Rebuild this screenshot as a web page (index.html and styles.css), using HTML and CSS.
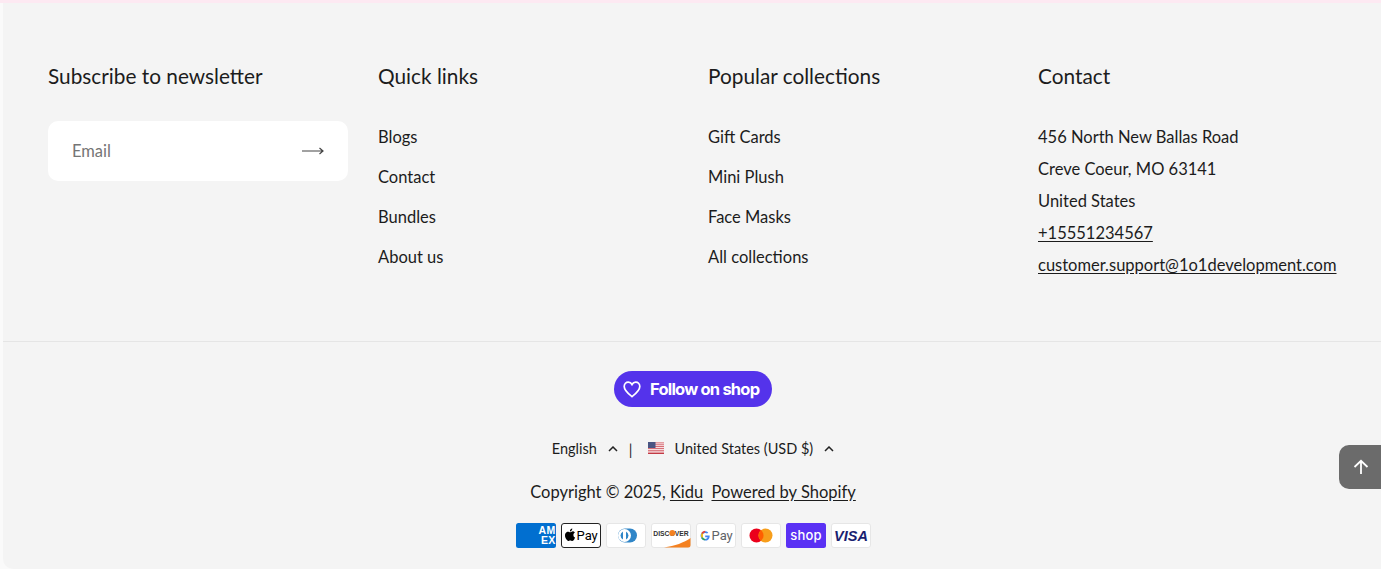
FILE: index.html
```html
<!DOCTYPE html>
<html lang="en">
    <head>
        <meta charset="UTF-8">
        <meta name="viewport" content="width=device-width, initial-scale=1.0">
        <title>Footer - Kidu</title>
        <link rel="stylesheet" href="styles.css">
    </head>
    <body>
        <div class="top-strip"></div>

        <footer class="footer">
            <div class="footer-columns">
                <div class="footer-col">
                    <h2>Subscribe to newsletter</h2>
                    <form class="newsletter">
                        <input type="email" placeholder="Email" aria-label="Email">
                        <button type="button" class="newsletter-btn" aria-label="Subscribe">
                            <svg width="22" height="10" viewBox="0 0 22 10" fill="none" stroke="#444" stroke-width="1.2"><path d="M0 5h21M17.500 2l3.500 3-3.500 3"/></svg>
                        </button>
                    </form>
                </div>
                <div class="footer-col">
                    <h2>Quick links</h2>
                    <ul class="link-list">
                        <li><a href="#">Blogs</a></li>
                        <li><a href="#">Contact</a></li>
                        <li><a href="#">Bundles</a></li>
                        <li><a href="#">About us</a></li>
                    </ul>
                </div>
                <div class="footer-col">
                    <h2>Popular collections</h2>
                    <ul class="link-list">
                        <li><a href="#">Gift Cards</a></li>
                        <li><a href="#">Mini Plush</a></li>
                        <li><a href="#">Face Masks</a></li>
                        <li><a href="#">All collections</a></li>
                    </ul>
                </div>
                <div class="footer-col">
                    <h2>Contact</h2>
                    <address class="contact">
                        <p>456 North New Ballas Road</p>
                        <p>Creve Coeur, MO 63141</p>
                        <p>United States</p>
                        <p><a href="#">+15551234567</a></p>
                        <p><a href="#">customer.support@1o1development.com</a></p>
                    </address>
                </div>
            </div>

            <div class="footer-bottom">
                <a href="#" class="follow-btn">
                    <svg width="18" height="17" viewBox="0 0 18 17" fill="none" stroke="#fff" stroke-width="1.7"><path d="M9 15.600C6.500 13.600 1.200 10 1.200 5.600 1.200 3 3.100 1.200 5.300 1.200c1.600 0 2.900.8 3.700 2.300.8-1.500 2.100-2.300 3.700-2.300 2.200 0 4.100 1.800 4.100 4.400 0 4.400-5.300 8-7.800 10z"/></svg>
                    <span>Follow on shop</span>
                </a>

                <div class="locale-row">
                    <span class="locale">English
                        <svg class="chevron" width="10" height="6" viewBox="0 0 10 6" fill="none" stroke="#222" stroke-width="1.5"><path d="M1 5l4-4 4 4"/></svg>
                    </span>
                    <span class="locale-sep">|</span>
                    <span class="locale">
                        <svg class="flag" width="16" height="12" viewBox="0 0 16 12">
                            <rect width="16" height="12" fill="#fff"/>
                            <path d="M0 .9h16M0 2.800h16M0 4.600h16M0 6.400h16M0 8.300h16M0 10.100h16" stroke="#d0555f" stroke-width=".95"/>
                            <path d="M0 11.500h16" stroke="#c23a45" stroke-width="1"/>
                            <rect width="7.500" height="6" fill="#4a5583"/>
                        </svg>
                        <span class="locale-name">United States (USD $)</span>
                        <svg class="chevron" width="10" height="6" viewBox="0 0 10 6" fill="none" stroke="#222" stroke-width="1.5"><path d="M1 5l4-4 4 4"/></svg>
                    </span>
                </div>

                <p class="copyright">Copyright © 2025, <a href="#">Kidu</a> <a href="#" class="powered">Powered by Shopify</a></p>

                <div class="payments">
                    <svg class="pay" viewBox="0 0 40 25">
                        <rect width="40" height="25" rx="2.500" fill="#016fd0"/>
                        <text x="39.500" y="10.500" text-anchor="end" class="amex-text">AM</text>
                        <text x="39.500" y="21" text-anchor="end" class="amex-text">EX</text>
                    </svg>
                    <svg class="pay" viewBox="0 0 40 25">
                        <rect x=".5" y=".5" width="39" height="24" rx="2.500" fill="#fff" stroke="#222"/>
                        <path d="M10.600 7.600c.5-.6.8-1.300.7-2-.7 0-1.400.4-1.800 1-.4.4-.7 1.200-.6 1.900.7 0 1.300-.4 1.700-.9zM11.300 8.700c-1 0-1.800.6-2.300.6s-1.200-.6-2-.6c-1 0-2 .6-2.500 1.500-1.100 1.900-.3 4.600.8 6.100.5.800 1.200 1.600 2 1.600s1.100-.5 2-.5 1.200.5 2 .5 1.400-.8 1.900-1.500c.6-.9.800-1.700.9-1.800-.9-.4-1.700-1.300-1.700-2.600 0-1.100.6-2 1.500-2.500-.6-.8-1.600-1.300-2.600-1.300z" fill="#000"/>
                        <text x="15.500" y="17" class="pay-text">Pay</text>
                    </svg>
                    <svg class="pay" viewBox="0 0 40 25">
                        <rect x=".5" y=".5" width="39" height="24" rx="2.500" fill="#fff" stroke="#e6e6e6"/>
                        <path d="M19 5.500h5a7 7 0 0 1 0 14h-5a7 7 0 0 1 0-14z" fill="#3086c8"/>
                        <circle cx="18.500" cy="12.500" r="6.500" fill="#fff"/>
                        <path d="M17 8.500a4.500 4.500 0 0 0 0 8z" fill="#3086c8"/>
                        <path d="M20 8.500a4.500 4.500 0 0 1 0 8z" fill="#3086c8"/>
                    </svg>
                    <svg class="pay" viewBox="0 0 40 25">
                        <rect x=".5" y=".5" width="39" height="24" rx="2.500" fill="#fff" stroke="#e6e6e6"/>
                        <path d="M13 24.500C24 23 33 19.500 39.500 15v7a2.500 2.500 0 0 1-2.500 2.500z" fill="#f48120"/>
                        <text x="20" y="12.500" text-anchor="middle" class="discover-text">DISCOVER</text>
                        <circle cx="21.300" cy="10" r="2.900" fill="#f48120"/>
                    </svg>
                    <svg class="pay" viewBox="0 0 40 25">
                        <rect x=".5" y=".5" width="39" height="24" rx="2.500" fill="#fff" stroke="#e6e6e6"/>
                        <path d="M13.500 12.500h-4.300v1.700h2.400c-.3 1.100-1.200 1.700-2.400 1.700a3 3 0 0 1 0-6c.7 0 1.400.3 1.900.7l1.200-1.200a4.700 4.700 0 1 0-3.100 8.200c2.500 0 4.500-1.700 4.500-4.700 0-.1 0-.3-.2-.4z" fill="#4285f4"/>
                        <path d="M5.500 10.100l1.500 1.100c.4-1 1.200-1.700 2.200-1.700V7.800c-1.600 0-3 .9-3.700 2.300z" fill="#ea4335"/>
                        <path d="M5.500 14.900c.7 1.500 2.100 2.400 3.700 2.400v-1.400c-1.100 0-2-.7-2.300-1.800z" fill="#34a853"/>
                        <path d="M5.100 12.500c0 .9.200 1.700.5 2.400l1.400-1.100c-.2-.8-.2-1.600 0-2.600L5.500 10.100c-.3.700-.4 1.500-.4 2.400z" fill="#fbbc04"/>
                        <text x="15.500" y="17" class="gpay-text">Pay</text>
                    </svg>
                    <svg class="pay" viewBox="0 0 40 25">
                        <rect x=".5" y=".5" width="39" height="24" rx="2.500" fill="#fff" stroke="#e6e6e6"/>
                        <circle cx="15.500" cy="12.500" r="7" fill="#eb001b"/>
                        <circle cx="24.500" cy="12.500" r="7" fill="#f79e1b"/>
                        <path d="M20 7.100a7 7 0 0 1 0 10.800 7 7 0 0 1 0-10.800z" fill="#ff5f00"/>
                    </svg>
                    <svg class="pay" viewBox="0 0 40 25">
                        <rect width="40" height="25" rx="2.500" fill="#5a31f4"/>
                        <text x="20" y="16.500" text-anchor="middle" class="shop-text">shop</text>
                    </svg>
                    <svg class="pay" viewBox="0 0 40 25">
                        <rect x=".5" y=".5" width="39" height="24" rx="2.500" fill="#fff" stroke="#e6e6e6"/>
                        <text x="20" y="17.500" text-anchor="middle" class="visa-text">VISA</text>
                    </svg>
                </div>
            </div>
        </footer>

        <a href="#" class="back-to-top" aria-label="Back to top">
            <svg width="16" height="16" viewBox="0 0 16 16" fill="none" stroke="#fff" stroke-width="1.800"><path d="M8 15V2M1.500 8L8 1.800 14.500 8"/></svg>
        </a>
    </body>
</html>
```
FILE: styles.css
```css
:root {
    --text: #1c1c1c;
    --footer-bg: #f4f4f4;
    --shop-purple: #5433eb;
}

* {
    box-sizing: border-box;
}

html, body {
    height: 569px;
    overflow: hidden;
}

body {
    margin: 0;
    background: #fafafa;
    color: var(--text);
    font-family: Lato, "Open Sans", sans-serif;
    font-size: 16.500px;
}

a {
    color: inherit;
    text-decoration: none;
}

.top-strip {
    height: 3px;
    background: #fde9f2;
}

.footer {
    margin-left: 3px;
    height: 566px;
    background: var(--footer-bg);
    border-bottom-left-radius: 10px;
}

.footer-columns {
    display: grid;
    grid-template-columns: repeat(4, 300px);
    column-gap: 30px;
    padding: 59px 45px 0;
    height: 339px;
    border-bottom: 1px solid #e5e5e5;
}

.footer-col h2 {
    margin: 0 0 32px;
    font-size: 20.800px;
    font-weight: 400;
    line-height: 27px;
}

.newsletter {
    display: flex;
    align-items: center;
    height: 60px;
    background: #fff;
    border-radius: 10px;
    padding: 0 24px;
}

.newsletter input {
    flex: 1;
    min-width: 0;
    border: none;
    outline: none;
    background: none;
    padding: 0;
    font: inherit;
}

.newsletter input::placeholder {
    color: #757575;
}

.newsletter-btn {
    border: none;
    background: none;
    padding: 0;
    display: flex;
}

.link-list {
    list-style: none;
    margin: 0;
    padding: 4px 0 0;
    display: flex;
    flex-direction: column;
    gap: 16px;
}

.link-list li {
    line-height: 24px;
}

.contact {
    font-style: normal;
    padding-top: 4px;
}

.contact p {
    margin: 0 0 8px;
    line-height: 24px;
}

.contact a,
.copyright a {
    text-decoration: underline;
    text-underline-offset: 2px;
}

.footer-bottom {
    display: flex;
    flex-direction: column;
    align-items: center;
    padding: 29px 0 0 2px;
}

.follow-btn {
    display: flex;
    align-items: center;
    gap: 9px;
    width: 158px;
    height: 36px;
    padding-left: 9px;
    border-radius: 18px;
    background: var(--shop-purple);
    color: #fff;
    font-family: Inter, sans-serif;
    font-size: 16.500px;
    font-weight: 700;
    letter-spacing: -0.8px;
}

.locale-row {
    display: flex;
    align-items: center;
    margin-top: 31px;
    height: 20px;
    font-size: 14.500px;
}

.locale {
    display: flex;
    align-items: center;
}

.chevron {
    margin: 2px 0 0 11px;
}

.locale-sep {
    margin: 2px 16px 0 11px;
}

.locale-name {
    margin-left: 10px;
}

.copyright {
    margin: 22px 0 0;
    line-height: 24px;
}

.powered {
    margin-left: 4px;
}

.payments {
    display: flex;
    gap: 5px;
    margin-top: 19px;
    padding-left: 1px;
}

.pay {
    display: block;
    width: 40px;
    height: 25px;
}

.amex-text {
    font: 700 10.500px "Liberation Sans", sans-serif;
    letter-spacing: 0.3px;
    fill: #fff;
}

.pay-text {
    font: 400 13px Roboto, sans-serif;
    fill: #000;
}

.gpay-text {
    font: 400 13px Roboto, sans-serif;
    fill: #5f6368;
}

.discover-text {
    font: 700 6.800px "Liberation Sans", sans-serif;
    fill: #333;
}

.shop-text {
    font: 500 13px Inter, sans-serif;
    letter-spacing: 0.2px;
    fill: #fff;
}

.visa-text {
    font: italic 700 14.500px "Liberation Sans", sans-serif;
    fill: #1a1f71;
}

.back-to-top {
    position: fixed;
    top: 445px;
    right: 0;
    width: 42px;
    height: 44px;
    padding-left: 2px;
    display: flex;
    align-items: center;
    justify-content: center;
    background: #6b6b6b;
    border-radius: 10px 0 0 10px;
}
```
